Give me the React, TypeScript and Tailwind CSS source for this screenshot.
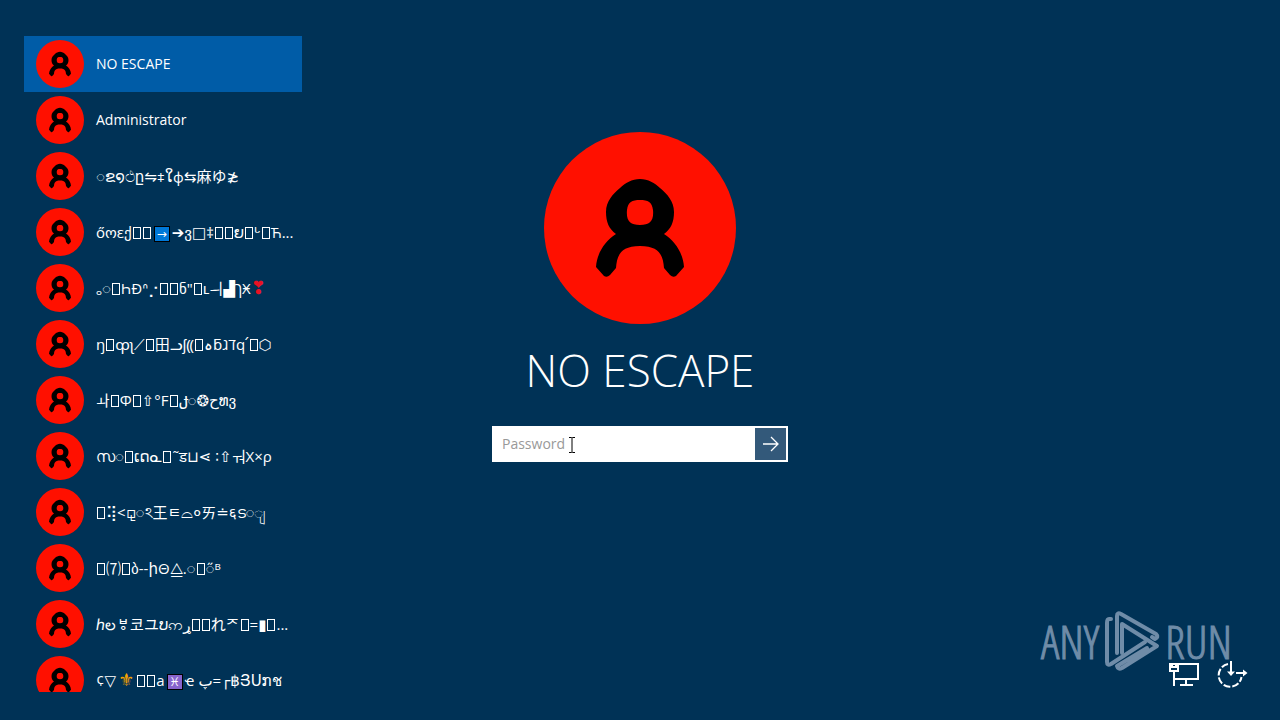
import React, { useState } from 'react';

type Account = {
  id: string;
  name: string;
};

const accounts: Account[] = [
  { id: '1', name: 'NO ESCAPE' },
  { id: '2', name: 'Administrator' },
  { id: '3', name: '◌ຂ໑ථը⇋⧧ໃф⇆麻ゆ≵' },
  { id: '4', name: 'őოεქ▯▯➡➔ვ□‡▯▯ຍ▯ᒡ▯Ћ...' },
  { id: '5', name: 'ₒ◌▯ҺÐᐢ⡐▯▯ნ"▯ʟㅢ▟ךӾ❣' },
  { id: '6', name: 'ŋ▯ȹʅ⟋▯田ᓗʃ⸨▯ہƃדגq՛▯⬡' },
  { id: '7', name: 'ㅘ▯Φ▯⇧°F▯ح❂◌ݪທვ' },
  { id: '8', name: 'സ◌▯ເດᓇ▯˜ड⊔⋖ ∶⇧ㅝX×ρ' },
  { id: '9', name: '▯⢽<⚼◌ঽ王ㅌ⌓०ㄞ≐६ട◌ျ' },
  { id: '10', name: '▯⑺▯ბ--իΘ⧋.◌▯◌̋ᴮ' },
  { id: '11', name: 'ℎలㅸ코ユບဢړ▯▯れᅎ▯=▮▯...' },
  { id: '12', name: '¢▽⚜▯▯a♓ҽ پ=┌฿ՅՍກช' },
];

// Characters in a name that are drawn in their own colours
const renderChar = (char: string, index: number) => {
  switch (char) {
    case '▯':
      return <span key={index} className="mx-px inline-block h-3 w-2 border border-white align-[-1px]" />;
    case '➡':
      return <span key={index} className="mx-0.5 inline-flex size-4 items-center justify-center border border-black bg-[#0078d7] align-middle text-xs leading-none">→</span>;
    case '♓':
      return <span key={index} className="mx-0.5 inline-flex size-4 items-center justify-center border border-black bg-[#8764cc] align-middle text-xs leading-none">♓</span>;
    case '⚜':
      return <span key={index} className="mx-0.5 text-lg leading-none text-[#f5a300]">⚜</span>;
    case '❣':
      return <span key={index} className="text-lg leading-none text-[#e81224]">❣</span>;
    default:
      return char;
  }
};

const isPlain = (name: string) => /^[ -~]+$/.test(name);

const Avatar: React.FC<{ className: string }> = ({ className }) => (
  <svg viewBox="0 0 192 192" className={`shrink-0 ${className}`} aria-hidden="true">
    <circle cx="96" cy="96" r="96" fill="#ff1000" />
    <path
      fillRule="evenodd"
      d="M96 47C104 47 111 51 116 56C123 62 130 69 130 80C130 90 127 97 120 102C131 109 139 121 140 135L132 144Q129 146 126 143L120 136C119 125 117 114 96 114C75 114 73 125 72 136L66 143Q63 146 60 144L52 135C53 121 61 109 72 102C65 97 62 90 62 80C62 69 69 62 76 56C81 51 88 47 96 47ZM96 68C88 68 84 70 83 78C82 89 86 93 96 93C106 93 110 89 109 78C108 70 104 68 96 68Z"
      fill="#000"
    />
  </svg>
);

const Watermark: React.FC = () => (
  <div className="flex items-center font-['Open_Sans_Condensed_Light','Open_Sans_Condensed','Roboto_Condensed','Liberation_Sans_Narrow',sans-serif] text-[46px] leading-none font-light text-[#6f8ca8] [-webkit-text-stroke:1px_#6f8ca8]">
    <span>ANY</span>
    <svg viewBox="0 0 58 62" className="mx-1 h-[62px] w-[58px]" fill="none" stroke="currentColor" strokeWidth="4" strokeLinejoin="round" strokeLinecap="round" aria-hidden="true">
      <path d="M8 9H6Q4 9 4 13V52Q4 56 8 54L42 32" />
      <path d="M14 43V6Q14 2 18 4L53 24Q56 27 52 29L49 27" />
      <path d="M19 43V14L54 36L19 58Q15 60 14 56L44 38" />
    </svg>
    <span>RUN</span>
  </div>
);

export default function App() {
  const [selected, setSelected] = useState('1');
  const [password, setPassword] = useState('');

  const current = accounts.find((account) => account.id === selected) ?? accounts[0];

  return (
    <div className="grid h-screen grid-cols-[278px_1fr_278px] overflow-hidden bg-[#003256] px-6 font-['Open_Sans','Noto_Sans','DejaVu_Sans','Noto_Sans_CJK_JP','Noto_Sans_CJK_KR',sans-serif] text-white">
      {/* Account list */}
      <nav className="flex min-h-0 flex-col pt-9 pb-7">
        <div className="overflow-hidden">
          {accounts.map((account) => (
            <button
              key={account.id}
              type="button"
              onClick={() => setSelected(account.id)}
              className={`flex h-14 w-full items-center gap-3 px-3 text-left ${account.id === selected ? 'bg-[#005ca7]' : ''}`}
            >
              <Avatar className="size-12" />
              <span className={`leading-6 whitespace-nowrap ${isPlain(account.name) ? 'text-sm' : 'text-[15px]'}`}>
                {Array.from(account.name).map(renderChar)}
              </span>
            </button>
          ))}
        </div>
      </nav>

      {/* Sign-in form */}
      <main className="flex flex-col items-center pt-33">
        <Avatar className="size-48" />
        <h1 className="mt-4 text-[44px] leading-[60px] font-light whitespace-nowrap">{current.name}</h1>
        <form className="relative mt-[26px] flex h-9 w-74 border-2 border-white bg-white" onSubmit={(e) => e.preventDefault()}>
          <input
            type="password"
            aria-label="Password"
            placeholder="Password"
            value={password}
            onChange={(e) => setPassword(e.target.value)}
            className="min-w-0 flex-1 px-2 text-sm text-black outline-none placeholder:text-[#999999]"
          />
          <button type="submit" aria-label="Sign in" className="flex w-[31px] items-center justify-center bg-[#33597a]">
            <svg viewBox="0 0 16 16" className="size-4" fill="none" stroke="currentColor" strokeWidth="1.3" aria-hidden="true">
              <path d="M0 8H15M8 1L15 8L8 15" />
            </svg>
          </button>
          <svg viewBox="0 0 8 16" className="pointer-events-none absolute top-[9px] left-[74px] h-4 w-2" fill="none" stroke="#000" aria-hidden="true">
            <path d="M1 .5H3.5L4 1L4.500 .5H7M4 1V15M1 15.500H3.500L4 15L4.500 15.500H7" />
          </svg>
        </form>
      </main>

      {/* Watermark, network and ease of access */}
      <aside className="flex flex-col items-end justify-end pb-7">
        <div className="mr-6">
          <Watermark />
        </div>
        <div className="relative -mt-3 mr-2 flex gap-4">
          <button type="button" aria-label="Network">
            <svg viewBox="0 0 32 32" className="size-8" fill="none" stroke="#fff" strokeWidth="2" aria-hidden="true">
              <path d="M9 4H30V19H7M6 11V26M18 19V25M12 25H25" />
              <path d="M2 4H10V11H2ZM4 4V7H8V4" />
            </svg>
          </button>
          <button type="button" aria-label="Ease of access">
            <svg viewBox="0 0 32 32" className="size-8" fill="none" stroke="#fff" strokeWidth="2" aria-hidden="true">
              <path d="M12 4A11.500 11.500 0 1 0 25.500 17" strokeDasharray="7 2" />
              <path d="M15 1V13M20 13H29" />
              <path d="M11 11.500H19L15 16ZM27 9.500V16.500L31.500 13Z" fill="#fff" stroke="none" />
            </svg>
          </button>
        </div>
      </aside>
    </div>
  );
}
